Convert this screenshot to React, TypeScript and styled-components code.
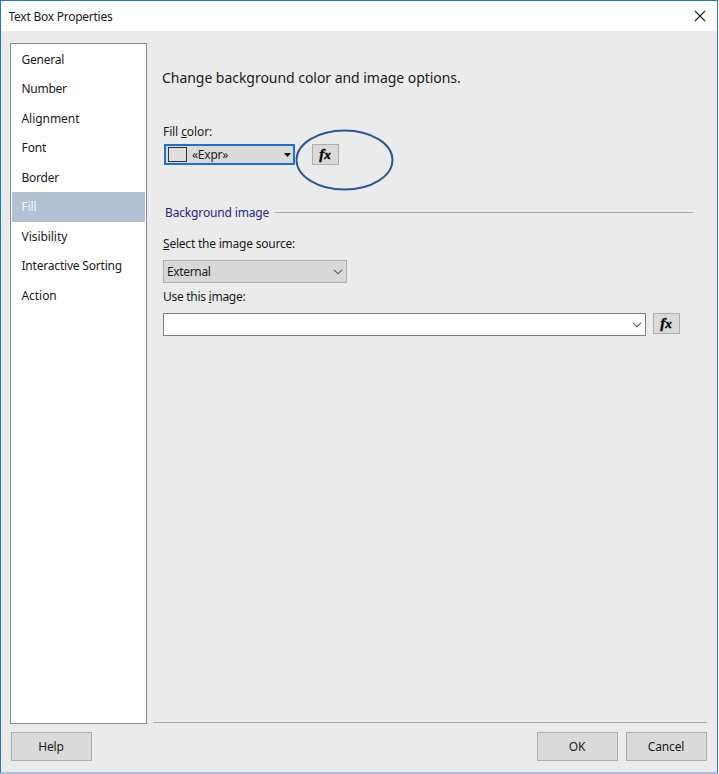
import React from "react";
import styled, { createGlobalStyle } from "styled-components";

const GlobalStyle = createGlobalStyle`
  * { box-sizing: border-box; }
  body { margin: 0; background: #fff; overflow: hidden; }
  button, input { font: inherit; color: inherit; padding: 0; margin: 0; }
`;

const Dialog = styled.div`
  width: 718px;
  height: 774px;
  display: flex;
  flex-direction: column;
  background: #ebebeb;
  border: 1px solid #2078d4;
  border-bottom: 2px solid #a9c4e2;
  font-family: "Noto Sans", "Open Sans", sans-serif;
  font-size: 12px;
  line-height: 18px;
  letter-spacing: -0.25px;
  color: #1a1a1a;
`;

const TitleBar = styled.header`
  height: 30px;
  flex: none;
  display: flex;
  align-items: center;
  justify-content: space-between;
  padding: 0 11px 0 7.5px;
  background: #fff;
`;

const Title = styled.span`
  padding-top: 1px;
`;

const CloseButton = styled.button`
  display: flex;
  border: 0;
  background: none;
`;

const Body = styled.div`
  flex: none;
  height: 693px;
  display: flex;
  gap: 6px;
  padding: 12px 10px 0 9px;
`;

const Sidebar = styled.nav`
  width: 137px;
  height: 681px;
  padding: 1px;
  border: 1px solid #858b96;
  background: #fff;
`;

const NavItem = styled.div<{ $active?: boolean; $track?: number }>`
  height: 29.44px;
  line-height: 29px;
  padding-left: 9.5px;
  letter-spacing: ${(p) => p.$track ?? -0.25}px;
  white-space: nowrap;
  color: ${(p) => (p.$active ? "#f4f7fb" : "#1a1a1a")};
  background: ${(p) => (p.$active ? "#b2c1d2" : "transparent")};
`;

const Panel = styled.main`
  flex: 1;
  height: 680px;
  padding: 24px 14px 0 10px;
  border-bottom: 1px solid #a9a9a9;
`;

const Text = styled.span<{ $track?: number }>`
  letter-spacing: ${(p) => p.$track ?? -0.25}px;
  white-space: nowrap;
`;

const Heading = styled.h1`
  margin: 0 0 34px -1px;
  font-size: 14px;
  font-weight: 400;
  line-height: 22px;
  letter-spacing: -0.04px;
`;

const Label = styled.div<{ $track?: number }>`
  height: 18px;
  letter-spacing: ${(p) => p.$track ?? -0.25}px;
`;

const Mnemonic = styled.span`
  text-decoration: underline;
  text-decoration-thickness: 1px;
  text-underline-offset: 1px;
  text-decoration-skip-ink: none;
`;

const Row = styled.div<{ $gap: number; $top: number }>`
  display: flex;
  align-items: flex-start;
  gap: ${(p) => p.$gap}px;
  margin-top: ${(p) => p.$top}px;
`;

const ColorPicker = styled.div`
  width: 131px;
  height: 21px;
  margin-left: 1px;
  display: flex;
  align-items: center;
  border: 2px solid #1b72d0;
  background: #dadada;
  padding: 0 2px 0 2px;
`;

const Swatch = styled.span`
  width: 19px;
  height: 15px;
  margin: 0 5px 0 0;
  border: 1px solid #333;
  background: #dedede;
`;

const PushRight = styled.span`
  margin-left: auto;
  display: flex;
`;

const FxButton = styled.button`
  width: 27px;
  height: 21px;
  display: flex;
  align-items: center;
  justify-content: center;
  border: 1px solid #adadad;
  background: #dadada;
`;

const FxGlyph = styled.span`
  display: flex;
  align-items: baseline;
  padding-right: 1px;
  font: italic bold 15px/16px "Liberation Serif", serif;
  letter-spacing: 0;
  color: #050505;
  -webkit-text-stroke: 0.4px #050505;

  small {
    font-size: 13px;
  }
`;

const Highlight = styled.div`
  position: relative;
  display: flex;
`;

const Ellipse = styled.svg`
  position: absolute;
  left: -17px;
  top: -16px;
  pointer-events: none;
`;

const GroupTitle = styled.h2`
  display: flex;
  align-items: center;
  gap: 6px;
  margin: 38px 0 13px 2px;
  font-size: 12px;
  font-weight: 400;
  line-height: 18px;
  letter-spacing: -0.15px;
  color: #25258a;

  span {
    padding-top: 1px;
    margin-bottom: -1px;
  }

  &::after {
    content: "";
    flex: 1;
    height: 1px;
    background: #a6a6a6;
  }
`;

const Select = styled.div`
  width: 184px;
  height: 23px;
  margin: 7px 0 5px;
  display: flex;
  align-items: center;
  padding: 0 3px 0 3px;
  border: 1px solid #adadad;
  background: #d9d9d9;
`;

const ComboBox = styled.div`
  width: 483px;
  height: 23px;
  display: flex;
  align-items: center;
  padding-right: 3px;
  border: 1px solid #7d7d7d;
  background: #fff;
`;

const Footer = styled.footer`
  display: flex;
  gap: 8px;
  padding: 8px 10px 0 10px;
`;

const Button = styled.button<{ $pushed?: boolean }>`
  width: 81px;
  height: 29px;
  margin-right: ${(p) => (p.$pushed ? "auto" : "0")};
  padding-right: 1px;
  border: 1px solid #adadad;
  background: #dadada;
  letter-spacing: -0.15px;
`;

const Chevron = () => (
  <svg width="10" height="6" viewBox="0 0 10 6" fill="none" stroke="#555" strokeWidth="1.1">
    <path d="M1 .8 5 4.8 9 .8" />
  </svg>
);

const ExpressionButton = () => (
  <FxButton aria-label="Expression">
    <FxGlyph>
      <span>f</span>
      <small>x</small>
    </FxGlyph>
  </FxButton>
);

const pages = [
  { name: "General", track: -0.25 },
  { name: "Number", track: -0.28 },
  { name: "Alignment", track: -0.05 },
  { name: "Font", track: -0.1 },
  { name: "Border", track: -0.25 },
  { name: "Fill", track: -0.1 },
  { name: "Visibility", track: -0.05 },
  { name: "Interactive Sorting", track: -0.2 },
  { name: "Action", track: -0.05 },
];

export default function App() {
  return (
    <>
      <GlobalStyle />
      <Dialog>
        <TitleBar>
          <Title>Text Box Properties</Title>
          <CloseButton aria-label="Close">
            <svg width="13" height="12" viewBox="0 0 13 12" stroke="#222" strokeWidth="1.1">
              <path d="M2 1 12 11M12 1 2 11" />
            </svg>
          </CloseButton>
        </TitleBar>
        <Body>
          <Sidebar>
            {pages.map((p) => (
              <NavItem key={p.name} $active={p.name === "Fill"} $track={p.track}>
                {p.name}
              </NavItem>
            ))}
          </Sidebar>
          <Panel>
            <Heading>Change background color and image options.</Heading>
            <Label $track={-0.1}>
              Fill <Mnemonic>c</Mnemonic>olor:
            </Label>
            <Row $gap={17} $top={3}>
              <ColorPicker>
                <Swatch />
                <Text>«Expr»</Text>
                <PushRight>
                  <svg width="7" height="4" viewBox="0 0 7 4">
                    <path d="M0 0H7L3.5 4Z" fill="#111" />
                  </svg>
                </PushRight>
              </ColorPicker>
              <Highlight>
                <ExpressionButton />
                <Ellipse width="100" height="64" viewBox="0 0 100 64">
                  <ellipse cx="49.5" cy="32" rx="48" ry="29.5" fill="none" stroke="#2f5597" strokeWidth="1.9" />
                </Ellipse>
              </Highlight>
            </Row>
            <GroupTitle>
              <span>Background image</span>
            </GroupTitle>
            <Row $gap={0} $top={14}>
              <Label $track={-0.22}>
                <Mnemonic>S</Mnemonic>elect the image source:
              </Label>
            </Row>
            <Select>
              <Text $track={-0.35}>External</Text>
              <PushRight>
                <Chevron />
              </PushRight>
            </Select>
            <Label $track={-0.28}>
              Use this <Mnemonic>i</Mnemonic>mage:
            </Label>
            <Row $gap={7} $top={7}>
              <ComboBox>
                <PushRight>
                  <Chevron />
                </PushRight>
              </ComboBox>
              <ExpressionButton />
            </Row>
          </Panel>
        </Body>
        <Footer>
          <Button $pushed>Help</Button>
          <Button>OK</Button>
          <Button>Cancel</Button>
        </Footer>
      </Dialog>
    </>
  );
}
